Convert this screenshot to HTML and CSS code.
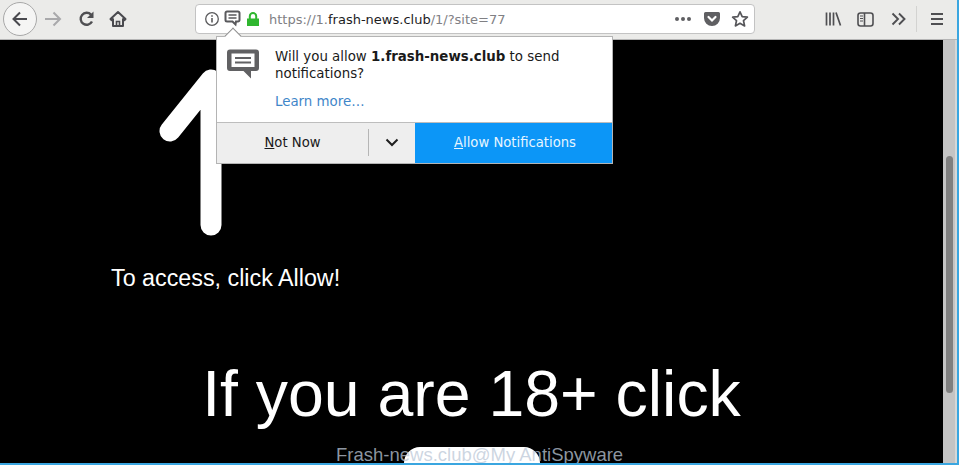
FILE: index.html
```html
<!DOCTYPE html>
<html lang="en">
<head>
  <meta charset="UTF-8" />
  <title>1.frash-news.club</title>
  <link rel="stylesheet" href="styles.css">
</head>
<body>
  <div class="window">
    <header class="toolbar">
      <div class="nav">
        <span class="back">
          <svg width="20" height="20" viewBox="0 0 20 20"><path d="M17 10H4M10 3.500L3.500 10l6.500 6.500" fill="none" stroke="#4a4a4f" stroke-width="2"/></svg>
        </span>
        <svg class="forward" width="18" height="18" viewBox="0 0 18 18"><path d="M1 9h15M9.500 2.500L16 9l-6.500 6.500" fill="none" stroke="#a9a9ab" stroke-width="2"/></svg>
        <svg class="reload" width="18" height="18" viewBox="0 0 18 18"><path d="M14 11.500A6 6 0 1 1 13 4.600" fill="none" stroke="#4f4f52" stroke-width="2.400"/><path d="M15.500 1.500v6.500h-6.500z" fill="#4f4f52"/></svg>
        <svg class="home" width="18" height="18" viewBox="0 0 18 18"><path d="M9 2L1.500 9l1 1.200L4 9v7h10V9l1.500 1.200 1-1.200z" fill="none" stroke="#4a4a4f" stroke-width="2" stroke-linejoin="round"/><path d="M7.500 16v-4.500h3V16" fill="none" stroke="#4a4a4f" stroke-width="1.600"/></svg>
      </div>

      <div class="urlbar">
        <svg width="16" height="16" viewBox="0 0 16 16"><circle cx="8" cy="8" r="6.300" fill="none" stroke="#5a5a5c" stroke-width="1.300"/><path d="M8 7v4.500M8 4.200v1.600" stroke="#5a5a5c" stroke-width="1.600"/></svg>
        <svg class="bubble-small" width="17" height="18" viewBox="0 0 17 18"><path d="M3 1.500h11a1.500 1.500 0 0 1 1.500 1.500v7a1.500 1.500 0 0 1-1.500 1.500h-2l-.5 3-3-3H3A1.500 1.500 0 0 1 1.500 10V3A1.500 1.500 0 0 1 3 1.500z" fill="#fff" stroke="#59595c" stroke-width="2"/><path d="M4.500 5h8M4.500 8h8" stroke="#59595c" stroke-width="1.400"/></svg>
        <svg class="lock" width="14" height="15" viewBox="0 0 14 15"><path d="M1 6.500h12V14H1z" fill="#2fb62f"/><path d="M3.800 7V4.300a3.200 3.200 0 0 1 6.400 0V7" fill="none" stroke="#2fb62f" stroke-width="2"/></svg>
        <span class="url">https://1.<b>frash-news.club</b>/1/?site=77</span>
        <span class="dots"><i></i><i></i><i></i></span>
        <svg class="pocket" width="18" height="16" viewBox="0 0 18 16"><path d="M2.500 1h13A1.500 1.500 0 0 1 17 2.500V7a8 8 0 0 1-16 0V2.500A1.500 1.500 0 0 1 2.500 1z" fill="#5f5f62"/><path d="M5.500 6L9 9.500 12.500 6" fill="none" stroke="#fff" stroke-width="2.200" stroke-linecap="round"/></svg>
        <svg class="star" width="18" height="18" viewBox="0 0 18 18"><path d="M9 1.800l2.200 4.800 5.200.6-3.900 3.500 1.100 5.200L9 13.300l-4.600 2.600 1.100-5.200L1.600 7.200l5.200-.6z" fill="none" stroke="#56565a" stroke-width="1.700" stroke-linejoin="round"/></svg>
      </div>

      <div class="tools">
        <svg width="17" height="16" viewBox="0 0 17 16"><path d="M1.500 1.500v13M5 1.500v13M8.500 1.500v13M11 1.500l4.500 13" fill="none" stroke="#4f4f52" stroke-width="1.700"/></svg>
        <svg width="17" height="15" viewBox="0 0 17 15"><rect x="1" y="1" width="15" height="13" rx="2.500" fill="none" stroke="#4f4f52" stroke-width="1.600"/><path d="M7.500 1v13" stroke="#4f4f52" stroke-width="1.600"/><path d="M3 4h3M3 6.500h3M3 9h3" stroke="#4f4f52" stroke-width="1.200"/></svg>
        <svg class="chevrons" width="15" height="14" viewBox="0 0 15 14"><path d="M1.500 1.500L7 7l-5.500 5.500M8 1.500L13.500 7 8 12.500" fill="none" stroke="#4f4f52" stroke-width="1.900"/></svg>
        <span class="divider"></span>
        <svg width="14" height="14" viewBox="0 0 14 14"><path d="M1 2h12M1 7h12M1 12h12" stroke="#4f4f52" stroke-width="1.800"/></svg>
      </div>
    </header>

    <div class="viewport">
      <main class="page">
        <svg class="arrow" width="64" height="170" viewBox="0 0 64 170"><path d="M11 62L52 11V156" fill="none" stroke="#fff" stroke-width="21" stroke-linecap="round" stroke-linejoin="round"/></svg>
        <p class="access">To access, click Allow!</p>
        <h1 class="headline">If you are 18+ click</h1>
        <div class="page-button"></div>
      </main>
      <div class="scrollbar"><div class="thumb"></div></div>
    </div>

    <section class="popup">
      <span class="popup-tip"></span>
      <div class="popup-body">
        <svg class="popup-icon" width="34" height="34" viewBox="0 0 34 34"><path d="M5 2.500h26a3 3 0 0 1 3 3V21a3 3 0 0 1-3 3h-5v7.500L18.500 24H5a3 3 0 0 1-3-3V5.500a3 3 0 0 1 3-3z" fill="#616163"/><path d="M6.500 6.500h23V20H6.500z" fill="#fff"/><path d="M10 11h16M10 15.500h16" stroke="#616163" stroke-width="2"/></svg>
        <div class="popup-text">
          <p>Will you allow <b>1.frash-news.club</b> to send notifications?</p>
          <a class="learn" href="#">Learn more…</a>
        </div>
      </div>
      <div class="popup-actions">
        <button class="btn-later"><u>N</u>ot Now</button>
        <button class="btn-more"><svg width="14" height="9" viewBox="0 0 14 9"><path d="M1.500 1.500L7 7l5.500-5.500" fill="none" stroke="#1f1f1f" stroke-width="2"/></svg></button>
        <button class="btn-allow"><u>A</u>llow Notifications</button>
      </div>
    </section>

    <div class="watermark">Frash-news.club@My AntiSpyware</div>
  </div>
</body>
</html>
```

FILE: styles.css
```css
* {
  box-sizing: border-box;
}
html, body {
  margin: 0;
  height: 100%;
  overflow: hidden;
}
body {
  font-family: "DejaVu Sans", sans-serif;
  background: #e9e9e7;
}
.window {
  position: relative;
  width: 959px;
  height: 465px;
  display: flex;
  flex-direction: column;
  border-right: 2px solid #3aa6e0;
  border-bottom: 2px solid #3aa6e0;
  overflow: hidden;
}

/* toolbar */
.toolbar {
  height: 40px;
  flex: none;
  display: flex;
  align-items: center;
  background: #ebebe9;
  border-bottom: 1px solid #b5b5b5;
  padding-bottom: 1px;
}
.nav {
  width: 195px;
  flex: none;
  display: flex;
  align-items: center;
  padding-left: 3px;
}
.back {
  width: 34px;
  height: 34px;
  display: flex;
  align-items: center;
  justify-content: center;
  border: 1px solid #a8a8a8;
  border-radius: 50%;
  background: #f5f5f4;
}
.forward {
  margin-left: 7px;
}
.reload {
  margin-left: 16px;
}
.home {
  margin-left: 13px;
}
.urlbar {
  width: 560px;
  height: 30px;
  flex: none;
  display: flex;
  align-items: center;
  padding: 0 5px 0 8px;
  background: #fff;
  border: 1px solid #c3c3c3;
  border-radius: 4px;
}
.bubble-small {
  margin-left: 4px;
}
.lock {
  margin-left: 5px;
}
.url {
  margin-left: 9px;
  flex: 1;
  font-size: 13px;
  color: #808084;
  white-space: nowrap;
}
.url b {
  font-weight: normal;
  color: #1c1c1e;
}
.dots {
  display: flex;
  gap: 2px;
  margin-right: 12px;
}
.dots i {
  width: 4px;
  height: 4px;
  border-radius: 50%;
  background: #5f5f62;
}
.pocket {
  margin-right: 10px;
}
.tools {
  flex: 1;
  display: flex;
  align-items: center;
  padding-left: 70px;
  gap: 15px;
}
.tools .chevrons {
  margin-left: 2px;
}
.tools .divider {
  width: 1px;
  height: 26px;
  background: #d3d3d1;
  margin: 0 -2px 0 -5px;
}

/* page */
.viewport {
  flex: 1;
  min-height: 0;
  display: flex;
}
.page {
  position: relative;
  flex: 1;
  background: #000;
  color: #fff;
  font-family: "Liberation Sans", sans-serif;
  overflow: hidden;
}
.arrow {
  position: absolute;
  left: 159px;
  top: 29px;
}
.access {
  position: absolute;
  left: 111px;
  top: 223px;
  margin: 0;
  font-size: 23.300px;
  line-height: 30px;
}
.headline {
  margin: 0;
  position: absolute;
  left: 0;
  right: 0;
  top: 316px;
  text-align: center;
  font-size: 64.400px;
  font-weight: normal;
  line-height: 76px;
}
.page-button {
  position: absolute;
  left: 404px;
  top: 407px;
  width: 136px;
  height: 40px;
  border-radius: 16px;
  background: #fff;
}
.scrollbar {
  width: 14px;
  flex: none;
  padding: 116px 3px 0;
  background: #c4c4c4;
  border-right: 2px solid #d6d8d8;
}
.thumb {
  width: 7px;
  height: 237px;
  border-radius: 4px;
  background: #7f7f7f;
}

/* notification popup */
.popup {
  position: absolute;
  left: 216px;
  top: 36px;
  width: 397px;
  height: 128px;
  background: #fff;
  border: 1px solid #b4b4b4;
  display: flex;
  flex-direction: column;
}
.popup-tip {
  position: absolute;
  left: 10px;
  top: -7px;
  width: 12px;
  height: 12px;
  background: #fff;
  border-left: 1px solid #8e8e8e;
  border-top: 1px solid #8e8e8e;
  transform: rotate(45deg);
}
.popup-body {
  flex: 1;
  display: flex;
  padding: 10px 10px 0 8px;
}
.popup-icon {
  flex: none;
}
.popup-text {
  margin-left: 16px;
  padding-top: 1px;
  font-size: 13.360px;
  line-height: 17px;
  color: #1a1a1a;
}
.popup-text p {
  margin: 0;
  width: 320px;
}
.learn {
  display: block;
  margin-top: 11px;
  color: #3f86c9;
  text-decoration: none;
}
.popup-actions {
  height: 41px;
  flex: none;
  display: flex;
  border-top: 1px solid #bdbdbd;
}
.popup-actions button {
  font-family: inherit;
  font-size: 13.200px;
  border: none;
  padding: 0 0 2px;
}
.btn-later {
  width: 151px;
  background: #eeeeee;
  color: #1a1a1a;
}
.btn-more {
  width: 47px;
  background: #eeeeee;
  position: relative;
}
.btn-more::before {
  content: "";
  position: absolute;
  left: 0;
  top: 6px;
  bottom: 7px;
  width: 1px;
  background: #b5b5b5;
}
.btn-allow {
  flex: 1;
  background: #0c96f7;
  color: #e6f5ff;
}
.popup-actions .btn-allow {
  padding-left: 3px;
}

.watermark {
  position: absolute;
  left: 336px;
  top: 443px;
  font-family: "Liberation Sans", sans-serif;
  font-size: 18.500px;
  line-height: 23px;
  color: rgba(188, 200, 215, 0.75);
}
```
